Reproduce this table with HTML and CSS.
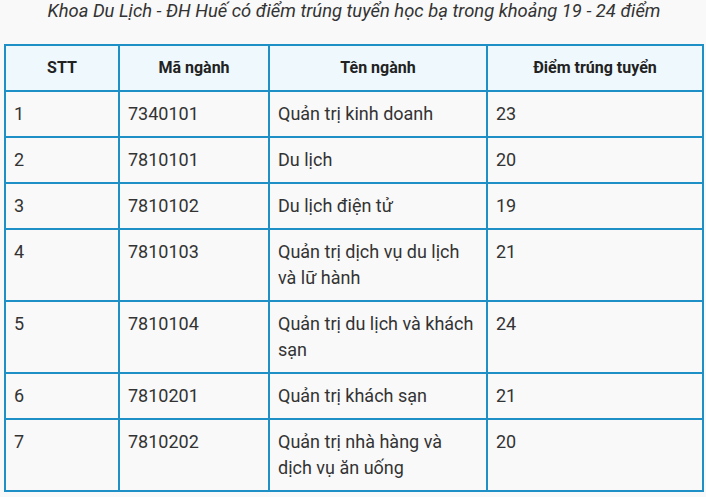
FILE: index.html
```html
<!DOCTYPE html>
<html lang="vi">
<head>
<meta charset="utf-8">
<title>Khoa Du Lịch - ĐH Huế</title>
<link rel="stylesheet" href="styles.css">
</head>
<body>
<div class="page">
  <p class="caption">Khoa Du Lịch - ĐH Huế có điểm trúng tuyển học bạ trong khoảng 19 - 24 điểm</p>
  <table class="scores">
    <colgroup>
      <col class="c1"><col class="c2"><col class="c3"><col class="c4">
    </colgroup>
    <thead>
      <tr><th>STT</th><th>Mã ngành</th><th>Tên ngành</th><th>Điểm trúng tuyển</th></tr>
    </thead>
    <tbody>
      <tr><td>1</td><td>7340101</td><td>Quản trị kinh doanh</td><td>23</td></tr>
      <tr><td>2</td><td>7810101</td><td>Du lịch</td><td>20</td></tr>
      <tr><td>3</td><td>7810102</td><td>Du lịch điện tử</td><td>19</td></tr>
      <tr><td>4</td><td>7810103</td><td>Quản trị dịch vụ du lịch và lữ hành</td><td>21</td></tr>
      <tr><td>5</td><td>7810104</td><td>Quản trị du lịch và khách sạn</td><td>24</td></tr>
      <tr><td>6</td><td>7810201</td><td>Quản trị khách sạn</td><td>21</td></tr>
      <tr><td>7</td><td>7810202</td><td>Quản trị nhà hàng và dịch vụ ăn uống</td><td>20</td></tr>
    </tbody>
  </table>
</div>
</body>
</html>
```

FILE: styles.css
```css
html, body {
  margin: 0;
  padding: 0;
  background: #f9f9f9;
}

.page {
  padding: 0 2px 0 4px;
  font-family: Roboto, "Noto Sans", "Liberation Sans", sans-serif;
  color: #333;
}

.caption {
  margin: 0 0 22px;
  font-size: 18.4px;
  line-height: 22px;
  font-style: italic;
  text-align: center;
  color: #333;
}

.scores {
  width: 100%;
  border-collapse: collapse;
  table-layout: fixed;
  font-size: 18px;
  line-height: 26px;
}

.c1 { width: 114px; }
.c2 { width: 150px; }
.c3 { width: 218px; }
.c4 { width: auto; }

.scores th,
.scores td {
  border: 2px solid #1f90c6;
  padding: 9px 8px 9px 8px;
  text-align: left;
  vertical-align: top;
}

.scores th {
  background: #eef8fd;
  font-weight: 700;
  text-align: center;
  color: #222;
  font-size: 16px;
  padding: 9px 8px 9px 8px;
}
```
